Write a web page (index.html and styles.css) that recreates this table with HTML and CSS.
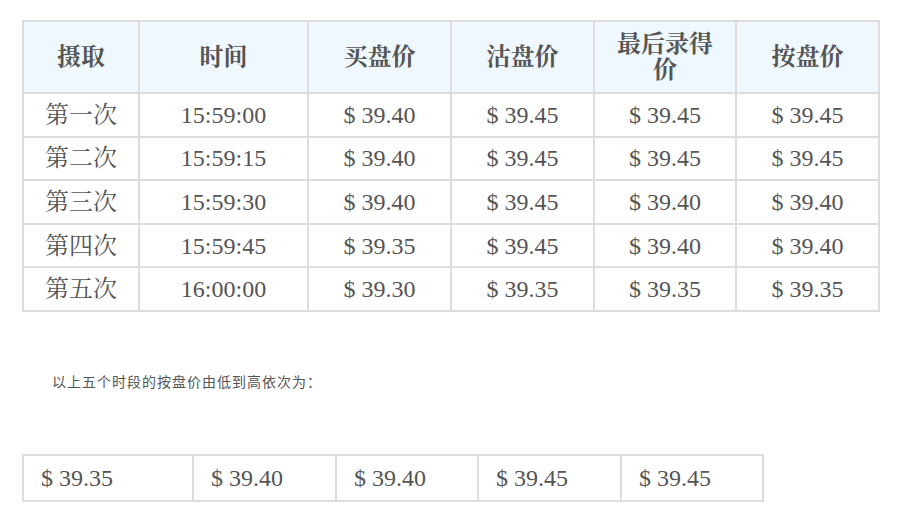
FILE: index.html
```html
<!DOCTYPE html>
<html lang="zh">
<head>
<meta charset="utf-8">
<link rel="stylesheet" href="styles.css">
</head>
<body>
<div class="page">
  <table class="quotes">
    <colgroup>
      <col class="c1"><col class="c2"><col class="c3"><col class="c4"><col class="c5"><col class="c6">
    </colgroup>
    <thead>
      <tr>
        <th>摄取</th><th>时间</th><th>买盘价</th><th>沽盘价</th><th>最后录得价</th><th>按盘价</th>
      </tr>
    </thead>
    <tbody>
      <tr><td>第一次</td><td>15:59:00</td><td>$ 39.40</td><td>$ 39.45</td><td>$ 39.45</td><td>$ 39.45</td></tr>
      <tr><td>第二次</td><td>15:59:15</td><td>$ 39.40</td><td>$ 39.45</td><td>$ 39.45</td><td>$ 39.45</td></tr>
      <tr><td>第三次</td><td>15:59:30</td><td>$ 39.40</td><td>$ 39.45</td><td>$ 39.40</td><td>$ 39.40</td></tr>
      <tr><td>第四次</td><td>15:59:45</td><td>$ 39.35</td><td>$ 39.45</td><td>$ 39.40</td><td>$ 39.40</td></tr>
      <tr><td>第五次</td><td>16:00:00</td><td>$ 39.30</td><td>$ 39.35</td><td>$ 39.35</td><td>$ 39.35</td></tr>
    </tbody>
  </table>
  <p class="note">以上五个时段的按盘价由低到高依次为：</p>
  <table class="sorted">
    <colgroup>
      <col class="s1"><col class="s2"><col class="s3"><col class="s4"><col class="s5">
    </colgroup>
    <tbody>
      <tr><td>$ 39.35</td><td>$ 39.40</td><td>$ 39.40</td><td>$ 39.45</td><td>$ 39.45</td></tr>
    </tbody>
  </table>
</div>
</body>
</html>
```
FILE: styles.css
```css
body {
  margin: 8px;
  background: #fff;
  font-family: "Liberation Serif", "Noto Serif CJK SC", "Noto Sans CJK SC", serif;
  color: #555;
}
.page {
  padding: 12px 14px;
}
table {
  border-collapse: collapse;
  table-layout: fixed;
}
.quotes {
  width: 856px;
}
.c1 { width: 116px; }
.c2 { width: 169px; }
.c3 { width: 143px; }
.c4 { width: 143px; }
.c5 { width: 142px; }
.c6 { width: 143px; }
.quotes th,
.quotes td {
  border: 2px solid #dddddd;
  text-align: center;
  font-size: 24px;
  padding: 0 20px;
}
.quotes th {
  background: #f0f8ff;
  height: 70px;
  font-weight: bold;
  line-height: 26px;
  color: #555;
}
.quotes td {
  height: 41.6px;
  line-height: 28px;
  color: #555;
}
.note {
  margin: 59px 0 63px 30px;
  font-family: "Noto Sans CJK SC", sans-serif;
  font-size: 14px;
  letter-spacing: 1px;
  line-height: 20px;
  color: #555;
}
.sorted {
  width: 740px;
}
.s1 { width: 170px; }
.s2 { width: 143px; }
.s3 { width: 142px; }
.s4 { width: 143px; }
.s5 { width: 142px; }
.sorted td {
  border: 2px solid #dddddd;
  height: 44px;
  padding: 0 17px;
  font-size: 24px;
  line-height: 28px;
  text-align: left;
  color: #555;
}
```
